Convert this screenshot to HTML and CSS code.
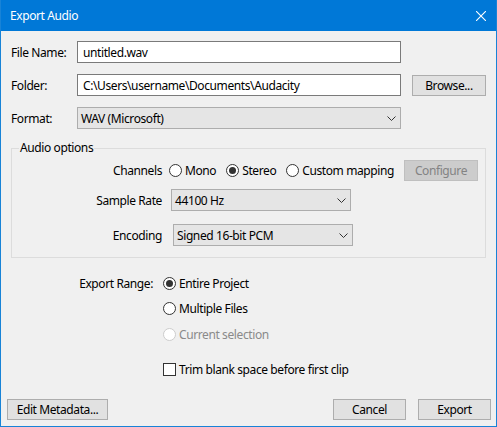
FILE: index.html
```html
<!DOCTYPE html>
<html>
<head>
<meta charset="utf-8">
<link rel="stylesheet" href="styles.css">
</head>
<body>
<div class="window">
  <div class="titlebar">
    <span class="title">Export Audio</span>
    <svg class="close" width="10" height="10" viewBox="0 0 10 10"><path d="M0 0 L10 10 M10 0 L0 10" stroke="#fff" stroke-width="1.1" fill="none"/></svg>
  </div>
  <div class="main">
    <div class="row">
      <span class="lbl">File Name:</span>
      <div class="input">untitled.wav</div>
    </div>
    <div class="row">
      <span class="lbl">Folder:</span>
      <div class="input">C:\Users\username\Documents\Audacity</div>
      <div class="btn browse">Browse...</div>
    </div>
    <div class="row">
      <span class="lbl">Format:</span>
      <div class="combo combo-format"><span>WAV (Microsoft)</span><svg class="chev" width="9" height="5" viewBox="0 0 9 5"><path d="M0.5 0.5 L4.5 4.5 L8.5 0.5" stroke="#333" fill="none"/></svg></div>
    </div>

    <div class="group">
      <div class="group-title">Audio options</div>
      <div class="grow grow-ch">
        <span class="glbl">Channels</span>
        <div class="radios">
          <span class="opt"><svg class="rb" width="13" height="13" viewBox="0 0 13 13"><circle cx="6.5" cy="6.5" r="6" fill="#fff" stroke="#333"/></svg>Mono</span>
          <span class="opt"><svg class="rb" width="13" height="13" viewBox="0 0 13 13"><circle cx="6.5" cy="6.5" r="6" fill="#fff" stroke="#333"/><circle cx="6.5" cy="6.5" r="3.5" fill="#333"/></svg>Stereo</span>
          <span class="opt"><svg class="rb" width="13" height="13" viewBox="0 0 13 13"><circle cx="6.5" cy="6.5" r="6" fill="#fff" stroke="#333"/></svg>Custom mapping</span>
        </div>
        <div class="btn configure">Configure</div>
      </div>
      <div class="grow grow-sr">
        <span class="glbl">Sample Rate</span>
        <div class="combo combo-small"><span>44100 Hz</span><svg class="chev" width="9" height="5" viewBox="0 0 9 5"><path d="M0.5 0.5 L4.5 4.5 L8.5 0.5" stroke="#333" fill="none"/></svg></div>
      </div>
      <div class="grow grow-enc">
        <span class="glbl">Encoding</span>
        <div class="combo combo-small"><span>Signed 16-bit PCM</span><svg class="chev" width="9" height="5" viewBox="0 0 9 5"><path d="M0.5 0.5 L4.5 4.5 L8.5 0.5" stroke="#333" fill="none"/></svg></div>
      </div>
    </div>

    <div class="range">
      <span class="range-lbl">Export Range:</span>
      <div class="range-opts">
        <span class="opt ropt"><svg class="rb" width="13" height="13" viewBox="0 0 13 13"><circle cx="6.5" cy="6.5" r="6" fill="#fff" stroke="#333"/><circle cx="6.5" cy="6.5" r="3.5" fill="#333"/></svg>Entire Project</span>
        <span class="opt ropt"><svg class="rb" width="13" height="13" viewBox="0 0 13 13"><circle cx="6.5" cy="6.5" r="6" fill="#fff" stroke="#333"/></svg>Multiple Files</span>
        <span class="opt ropt disabled"><svg class="rb" width="13" height="13" viewBox="0 0 13 13"><circle cx="6.5" cy="6.5" r="6" fill="#fff" stroke="#cccccc"/></svg>Current selection</span>
        <span class="opt ropt check"><svg class="rb" width="13" height="13" viewBox="0 0 13 13"><rect x="0.5" y="0.5" width="12" height="12" fill="#fff" stroke="#333"/></svg>Trim blank space before first clip</span>
      </div>
    </div>
  </div>
  <div class="footer">
    <div class="btn meta">Edit Metadata...</div>
    <div class="spacer"></div>
    <div class="btn cancel">Cancel</div>
    <div class="btn export">Export</div>
  </div>
</div>
</body>
</html>
```
FILE: styles.css
```css
html, body {
  margin: 0;
  padding: 0;
}
body {
  font-family: "Noto Sans", "DejaVu Sans", sans-serif;
  font-size: 12px;
  letter-spacing: -0.4px;
  color: #000;
}
.window {
  width: 497px;
  height: 427px;
  box-sizing: border-box;
  border: 1px solid #1883d7;
  border-top: none;
  background: #f0f0f0;
  display: flex;
  flex-direction: column;
}
.titlebar {
  height: 31px;
  flex: none;
  background: #0078d7;
  color: #fff;
  display: flex;
  align-items: center;
  justify-content: space-between;
  padding: 0 10px 0 9px;
}
.title {
  line-height: 16px;
}
.close {
  display: block;
}
.main {
  padding: 10px 10px 0 10px;
  display: flex;
  flex-direction: column;
}
.row {
  display: flex;
  align-items: center;
  height: 22px;
}
.row + .row {
  margin-top: 11px;
}
.lbl {
  width: 66px;
  flex: none;
}
.input {
  width: 324px;
  height: 22px;
  box-sizing: border-box;
  border: 1px solid #7a7a7a;
  background: #fff;
  padding: 0 5px;
  display: flex;
  align-items: center;
  white-space: nowrap;
}
.btn {
  height: 21px;
  box-sizing: border-box;
  border: 1px solid #adadad;
  background: #e1e1e1;
  display: flex;
  align-items: center;
  justify-content: center;
  white-space: nowrap;
  flex: none;
}
.browse {
  width: 74px;
  margin-left: 11px;
}
.combo {
  height: 22px;
  box-sizing: border-box;
  border: 1px solid #adadad;
  background: #e5e5e5;
  display: flex;
  align-items: center;
  justify-content: space-between;
  padding: 0 4px 0 3px;
  white-space: nowrap;
  flex: none;
}
.combo-format {
  width: 324px;
}
.chev {
  display: block;
}
.group {
  margin-top: 19px;
  border: 1px solid #dcdcdc;
  padding: 0 6px 11px 0;
  display: flex;
  flex-direction: column;
}
.group-title {
  align-self: flex-start;
  margin: -9px 0 0 7px;
  padding: 0 1px;
  background: #f0f0f0;
  line-height: 16px;
}
.grow {
  display: flex;
  align-items: center;
}
.glbl {
  width: 150px;
  flex: none;
  text-align: right;
}
.grow-ch {
  margin-top: 4px;
  height: 21px;
}
.grow-sr {
  margin-top: 8px;
  height: 22px;
}
.grow-enc {
  margin-top: 13px;
  height: 22px;
}
.radios {
  display: flex;
  align-items: center;
  gap: 10px;
  margin-left: 7px;
}
.opt {
  display: flex;
  align-items: center;
  gap: 3px;
  white-space: nowrap;
}
.rb {
  display: block;
  flex: none;
}
.configure {
  width: 74px;
  margin-left: 10px;
  background: #cccccc;
  border-color: #bfbfbf;
  color: #838383;
}
.grow-sr .combo-small {
  width: 180px;
  margin-left: 9px;
}
.grow-enc .combo-small {
  width: 180px;
  margin-left: 11px;
}
.range {
  display: flex;
  margin-top: 15px;
}
.range-lbl {
  width: 142px;
  flex: none;
  text-align: right;
  height: 20px;
  display: flex;
  align-items: center;
  justify-content: flex-end;
}
.range-opts {
  margin-left: 10px;
  display: flex;
  flex-direction: column;
}
.ropt {
  height: 20px;
}
.ropt + .ropt {
  margin-top: 5px;
}
.ropt.disabled {
  margin-top: 6px;
  color: #8a8a8a;
}
.ropt.check {
  margin-top: 15px;
}
.footer {
  margin-top: auto;
  display: flex;
  align-items: center;
  padding: 0 5px 6px 6px;
}
.spacer {
  flex: 1;
}
.meta {
  width: 101px;
}
.cancel {
  width: 73px;
}
.export {
  width: 73px;
  margin-left: 12px;
}
```
